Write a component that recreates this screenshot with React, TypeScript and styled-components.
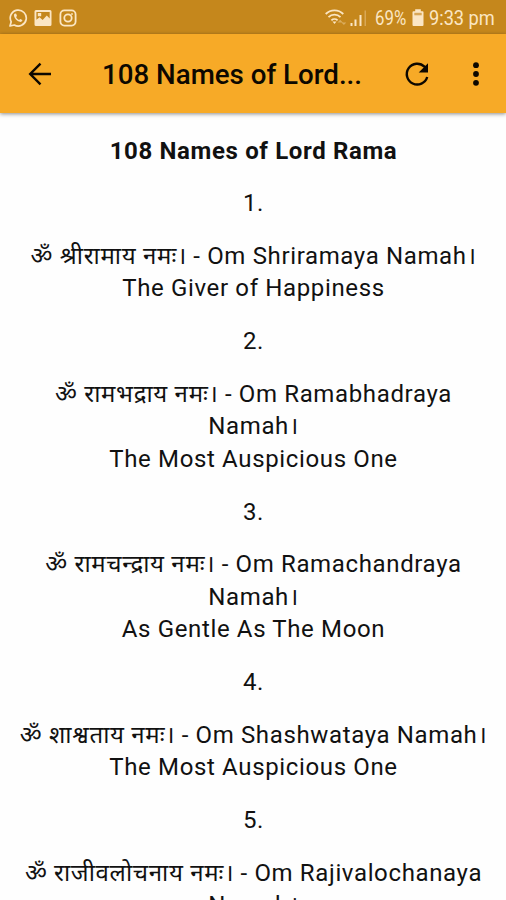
import React from 'react';
import styled, { createGlobalStyle } from 'styled-components';

const GlobalStyle = createGlobalStyle`
  * { box-sizing: border-box; }
  body { margin: 0; background: #fff; color: #111; font-family: Roboto, "Noto Sans Devanagari", "Noto Sans", sans-serif; }
`;

const Screen = styled.div`
  width: 506px;
  height: 900px;
  display: flex;
  flex-direction: column;
  overflow: hidden;
  background: #fefefe;
`;

const StatusBar = styled.div`
  flex: none;
  height: 34px;
  display: flex;
  align-items: center;
  justify-content: space-between;
  padding: 1px 10px 0 8px;
  background: #c5871c;
  color: #fbe6c4;
`;

const Notifications = styled.div`
  display: flex;
  gap: 6px;
  svg { display: block; }
`;

const Indicators = styled.div`
  display: flex;
  align-items: center;
  svg { display: block; }
`;

const StatusText = styled.span<{ $width: number; $indent?: number }>`
  width: ${(p) => p.$width}px;
  padding-left: ${(p) => p.$indent ?? 0}px;
  font-size: 20px;
  line-height: 24px;
  white-space: nowrap;
`;

const Condensed = styled.span<{ $scale: number }>`
  display: inline-block;
  transform: scaleX(${(p) => p.$scale});
  transform-origin: 0 50%;
`;

const AppBar = styled.header`
  flex: none;
  height: 79px;
  display: grid;
  grid-template-columns: 102px 285px 60px 59px;
  align-items: center;
  background: #f7aa27;
  box-shadow: 0 1px 4px rgba(0, 0, 0, 0.45);
  z-index: 1;
`;

const IconButton = styled.button<{ $left: number }>`
  padding: 0 0 0 ${(p) => p.$left}px;
  border: 0;
  background: none;
  color: #0d0800;
  svg { display: block; }
`;

const BarTitle = styled.h1`
  margin: 2px 0 0;
  color: #0d0800;
  font-size: 27.7px;
  font-weight: 500;
  line-height: 34px;
  white-space: nowrap;
`;

const Content = styled.main`
  flex: 1;
  min-height: 0;
  overflow: hidden;
  padding: 21.5px 0 0 1px;
  text-align: center;
  font-size: 24px;
  line-height: 32.4px;
  letter-spacing: 0.64px;
`;

const Heading = styled.h2`
  margin: 0;
  font-size: 24px;
  font-weight: 700;
`;

const Paragraph = styled.p`
  margin: 20.4px 0 0;
`;

const Line = styled.span`
  display: block;
  height: 32.4px;
  white-space: nowrap;
`;

const Sanskrit = styled.span`
  letter-spacing: 0.7px;
`;

type Name = { sanskrit: string; lines: string[] };

const names: Name[] = [
  { sanskrit: 'ॐ श्रीरामाय नमः।', lines: ['Om Shriramaya Namah।', 'The Giver of Happiness'] },
  { sanskrit: 'ॐ रामभद्राय नमः।', lines: ['Om Ramabhadraya', 'Namah।', 'The Most Auspicious One'] },
  { sanskrit: 'ॐ रामचन्द्राय नमः।', lines: ['Om Ramachandraya', 'Namah।', 'As Gentle As The Moon'] },
  { sanskrit: 'ॐ शाश्वताय नमः।', lines: ['Om Shashwataya Namah।', 'The Most Auspicious One'] },
  { sanskrit: 'ॐ राजीवलोचनाय नमः।', lines: ['Om Rajivalochanaya', 'Namah।'] },
];

const WhatsAppIcon = () => (
  <svg width="20" height="20" viewBox="0 0 20 20" fill="none" stroke="currentColor">
    <path d="M2 18l1.2-4.2A8 8 0 1 1 6.3 17Z" strokeWidth="1.7" strokeLinejoin="round" />
    <path d="M7.2 5.4c-.8.2-1.4 1-1.2 2.2.4 3.2 3.3 6 6.4 6.3 1.2 0 2-.8 2-1.8l-2.2-1.2-1.1 1.1c-1.3-.5-2.5-1.7-3-2.9l.9-1-.8-2.4Z" fill="currentColor" stroke="none" />
  </svg>
);

const PictureIcon = () => (
  <svg width="18" height="20" viewBox="0 0 18 20">
    <path fillRule="evenodd" fill="currentColor" d="M2 2h14a1.500 1.500 0 0 1 1.500 1.500v13A1.500 1.500 0 0 1 16 18H2a1.500 1.500 0 0 1-1.500-1.500v-13A1.500 1.500 0 0 1 2 2Zm.4 2v7.8l3.2-2.600 3 2.700 4.200-4.400 2.900 3V4ZM3.800 5.100h3.400v3.200H3.800Z" />
  </svg>
);

const InstagramIcon = () => (
  <svg width="20" height="20" viewBox="0 0 20 20" fill="none" stroke="currentColor" strokeWidth="1.8">
    <rect x="2.4" y="2.4" width="15.2" height="15.2" rx="4" />
    <circle cx="10" cy="10" r="3.7" />
    <circle cx="14" cy="6" r="0.6" fill="currentColor" strokeWidth="0.8" />
  </svg>
);

const WifiIcon = () => (
  <svg width="24" height="20" viewBox="0 0 24 20" fill="none" stroke="currentColor" strokeWidth="1.8">
    <path d="M0.700 6a12.500 12.500 0 0 1 17.600 0M3.500 9.200a8.400 8.400 0 0 1 12 0M6.400 12.300a4.500 4.500 0 0 1 6.200 0" />
    <path d="M7.500 13.400h4L9.500 16Z" fill="currentColor" stroke="none" />
    <path d="M12.500 14.500l2.700-2.700 2.600 2.700ZM16.500 14.500h4.800l-2.400 2.500Z" fill="currentColor" stroke="none" opacity="0.4" />
  </svg>
);

const SignalIcon = () => (
  <svg width="26" height="20" viewBox="0 0 26 20" fill="currentColor">
    <rect x="1.500" y="15" width="2" height="3" />
    <rect x="5.500" y="11.500" width="2" height="6.500" />
    <rect x="10.500" y="7" width="2" height="11" />
    <rect x="15.500" y="2.500" width="1.500" height="15.500" opacity="0.35" />
  </svg>
);

const BatteryIcon = () => (
  <svg width="12" height="20" viewBox="0 0 12 20" fill="currentColor">
    <path d="M3.2 1.2h5.6v2h1.7a1 1 0 0 1 1 1V17a1 1 0 0 1-1 1h-9a1 1 0 0 1-1-1V4.200a1 1 0 0 1 1-1h1.700Z" />
    <rect x="2.3" y="4.800" width="7.400" height="2.500" fill="#d8a656" />
  </svg>
);

const BackIcon = () => (
  <svg width="24" height="24" viewBox="0 0 24 24" fill="none" stroke="currentColor" strokeWidth="2.4">
    <path d="M23 12H2.500M12.500 1.700L2.200 12l10.300 10.300" />
  </svg>
);

const ReloadIcon = () => (
  <svg width="26" height="26" viewBox="0 0 26 26" fill="none">
    <path d="M23.200 16A10.400 10.400 0 1 1 20.500 5.700L22 7.300" stroke="currentColor" strokeWidth="2.400" />
    <path d="M24 2.200v9.300h-9.300Z" fill="currentColor" />
  </svg>
);

const MoreIcon = () => (
  <svg width="8" height="24" viewBox="0 0 8 24" fill="currentColor">
    <circle cx="4" cy="3.200" r="2.900" />
    <circle cx="4" cy="12" r="2.900" />
    <circle cx="4" cy="20.800" r="2.900" />
  </svg>
);

export default function App() {
  return (
    <Screen>
      <GlobalStyle />
      <StatusBar>
        <Notifications>
          <WhatsAppIcon />
          <PictureIcon />
          <InstagramIcon />
        </Notifications>
        <Indicators>
          <WifiIcon />
          <SignalIcon />
          <StatusText $width={37}><Condensed $scale={0.84}>69%</Condensed></StatusText>
          <BatteryIcon />
          <StatusText $width={72} $indent={5}><Condensed $scale={0.91}>9:33 pm</Condensed></StatusText>
        </Indicators>
      </StatusBar>
      <AppBar>
        <IconButton $left={28} aria-label="Back"><BackIcon /></IconButton>
        <BarTitle>108 Names of Lord...</BarTitle>
        <IconButton $left={17} aria-label="Reload"><ReloadIcon /></IconButton>
        <IconButton $left={25} aria-label="More options"><MoreIcon /></IconButton>
      </AppBar>
      <Content>
        <Heading>108 Names of Lord Rama</Heading>
        {names.map((name, i) => (
          <React.Fragment key={name.sanskrit}>
            <Paragraph>{i + 1}.</Paragraph>
            <Paragraph>
              {name.lines.map((line, n) => (
                <Line key={line}>
                  {n === 0 && <><Sanskrit lang="sa">{name.sanskrit}</Sanskrit>{' - '}</>}
                  {line}
                </Line>
              ))}
            </Paragraph>
          </React.Fragment>
        ))}
      </Content>
    </Screen>
  );
}
